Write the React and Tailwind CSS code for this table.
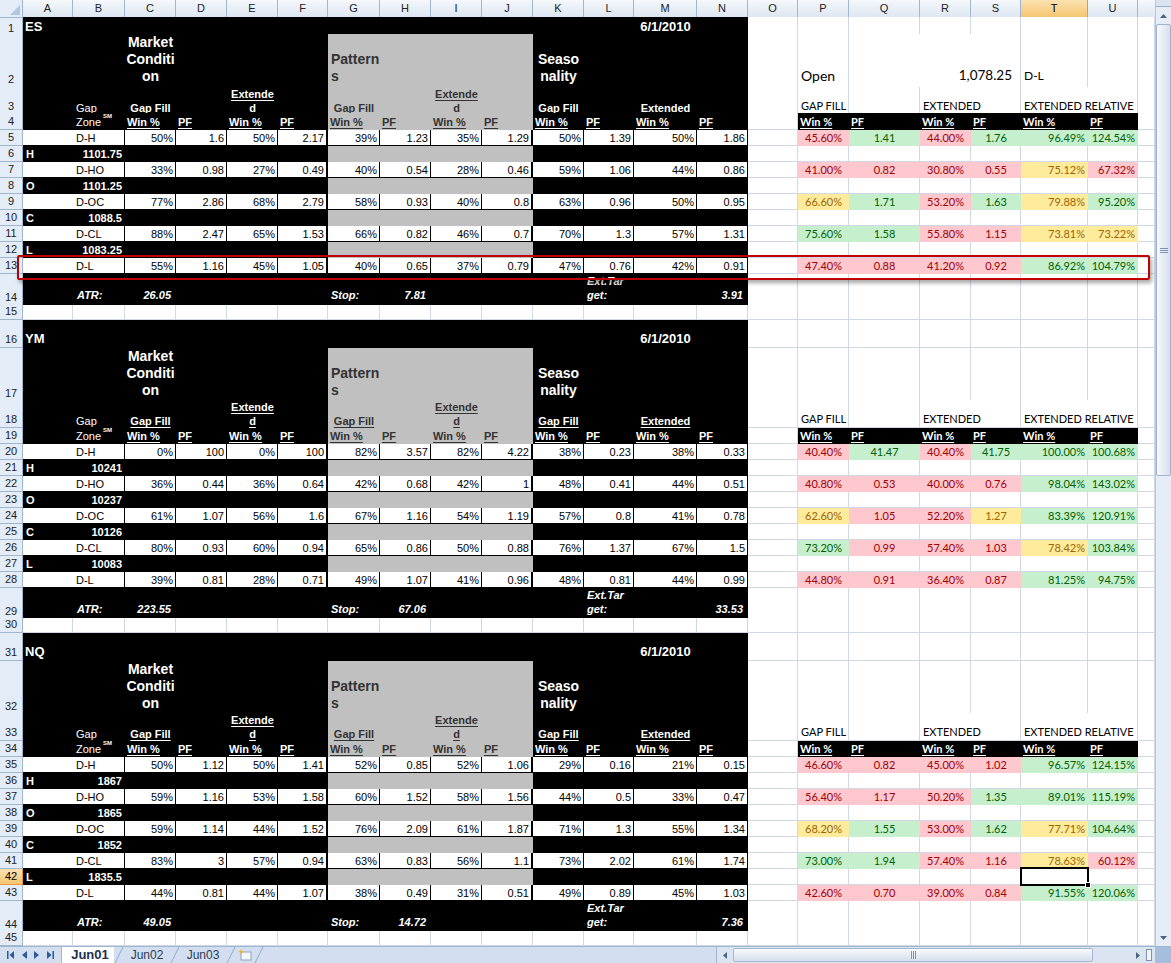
import React from "react";
import clsx from "clsx";

// column widths: row header, A..U, then the cut-off V column
const GRID =
  "grid grid-cols-[23px_50px_52px_51px_51px_51px_50px_52px_51px_51px_51px_51px_50px_63px_51px_50px_51px_71px_51px_50px_67px_50px_17px]";

const ARIAL = "font-['Liberation_Sans',Arial,sans-serif]";
const CAL = "font-['Lato','Open_Sans',sans-serif]";

const KIND = {
  blank: "bg-white border-r border-b border-[#d0d7e5]",
  blk: "bg-black text-white",
  gry: "bg-[#c0c0c0] text-[#333333]",
  dat: "bg-white border-r border-b border-black text-black",
  dat2: "bg-white border-r-2 border-b border-black text-black",
  edge: "bg-white border-b border-black",
  p: "bg-[#ffc7ce] text-[#9c0006]",
  g: "bg-[#c6efce] text-[#006100]",
  y: "bg-[#ffeb9c] text-[#9c6500]",
};

const T11 = "text-[11px] leading-[14px]";
const HU = "text-[11px] leading-[14px] font-bold underline underline-offset-[2px]";
const FT = "pb-[4px] text-[11px] leading-[14px] font-bold italic";
const R11 = "text-[11px] leading-[14px]";

const LETTERS = "ABCDEFGHIJKLMNOPQRSTU".split("");

// Blocks: ES / YM / NQ
const BLOCKS = [
  {
    name: "ES",
    start: 1,
    h: ["h-[17px]", "h-[53px]", "h-[26px]", "h-[17px]", "h-[31px]"],
    open: true,
    levels: [["H", "1101.75"], ["O", "1101.25"], ["C", "1088.5"], ["L", "1083.25"]],
    atr: "26.05",
    stop: "7.81",
    ext: "3.91",
    data: [
      ["D-H", "50% 1.6 50% 2.17 39% 1.23 35% 1.29 50% 1.39 50% 1.86", "45.60%:p 1.41:g 44.00%:p 1.76:g 96.49%:g 124.54%:g"],
      ["D-HO", "33% 0.98 27% 0.49 40% 0.54 28% 0.46 59% 1.06 44% 0.86", "41.00%:p 0.82:p 30.80%:p 0.55:p 75.12%:y 67.32%:p"],
      ["D-OC", "77% 2.86 68% 2.79 58% 0.93 40% 0.8 63% 0.96 50% 0.95", "66.60%:y 1.71:g 53.20%:p 1.63:g 79.88%:y 95.20%:g"],
      ["D-CL", "88% 2.47 65% 1.53 66% 0.82 46% 0.7 70% 1.3 57% 1.31", "75.60%:g 1.58:g 55.80%:p 1.15:p 73.81%:y 73.22%:y"],
      ["D-L", "55% 1.16 45% 1.05 40% 0.65 37% 0.79 47% 0.76 42% 0.91", "47.40%:p 0.88:p 41.20%:p 0.92:p 86.92%:g 104.79%:g"],
    ],
  },
  {
    name: "YM",
    start: 16,
    h: ["h-[28px]", "h-[52px]", "h-[28px]", "h-[16px]", "h-[30px]"],
    open: false,
    levels: [["H", "10241"], ["O", "10237"], ["C", "10126"], ["L", "10083"]],
    atr: "223.55",
    stop: "67.06",
    ext: "33.53",
    data: [
      ["D-H", "0% 100 0% 100 82% 3.57 82% 4.22 38% 0.23 38% 0.33", "40.40%:p 41.47:g 40.40%:p 41.75:g 100.00%:g 100.68%:g"],
      ["D-HO", "36% 0.44 36% 0.64 42% 0.68 42% 1 48% 0.41 44% 0.51", "40.80%:p 0.53:p 40.00%:p 0.76:p 98.04%:g 143.02%:g"],
      ["D-OC", "61% 1.07 56% 1.6 67% 1.16 54% 1.19 57% 0.8 41% 0.78", "62.60%:y 1.05:p 52.20%:p 1.27:y 83.39%:g 120.91%:g"],
      ["D-CL", "80% 0.93 60% 0.94 65% 0.86 50% 0.88 76% 1.37 67% 1.5", "73.20%:g 0.99:p 57.40%:p 1.03:p 78.42%:y 103.84%:g"],
      ["D-L", "39% 0.81 28% 0.71 49% 1.07 41% 0.96 48% 0.81 44% 0.99", "44.80%:p 0.91:p 36.40%:p 0.87:p 81.25%:g 94.75%:g"],
    ],
  },
  {
    name: "NQ",
    start: 31,
    h: ["h-[28px]", "h-[52px]", "h-[28px]", "h-[16px]", "h-[30px]"],
    open: false,
    levels: [["H", "1867"], ["O", "1865"], ["C", "1852"], ["L", "1835.5"]],
    atr: "49.05",
    stop: "14.72",
    ext: "7.36",
    data: [
      ["D-H", "50% 1.12 50% 1.41 52% 0.85 52% 1.06 29% 0.16 21% 0.15", "46.60%:p 0.82:p 45.00%:p 1.02:p 96.57%:g 124.15%:g"],
      ["D-HO", "59% 1.16 53% 1.58 60% 1.52 58% 1.56 44% 0.5 33% 0.47", "56.40%:p 1.17:p 50.20%:p 1.35:g 89.01%:g 115.19%:g"],
      ["D-OC", "59% 1.14 44% 1.52 76% 2.09 61% 1.87 71% 1.3 55% 1.34", "68.20%:y 1.55:g 53.00%:p 1.62:g 77.71%:y 104.64%:g"],
      ["D-CL", "83% 3 57% 0.94 63% 0.83 56% 1.1 73% 2.02 61% 1.74", "73.00%:g 1.94:g 57.40%:p 1.16:p 78.63%:y 60.12%:p"],
      ["D-L", "44% 0.81 44% 1.07 38% 0.49 31% 0.51 49% 0.89 45% 1.03", "42.60%:p 0.70:p 39.00%:p 0.84:p 91.55%:g 120.06%:g"],
    ],
  },
];

const SELECTED_ROW = 42;

const Cell = ({ k = "blank", className, children }) => (
  <div className={clsx("flex min-w-0 items-end whitespace-nowrap", KIND[k], className)}>{children}</div>
);

const blanks = (count, key = "b") =>
  Array.from({ length: count }, (_, i) => <Cell key={`${key}${i}`} />);

const RowHead = ({ n }) => (
  <div
    className={clsx(
      "flex items-end justify-center border-r border-b pb-[1px] text-[11px] leading-[13px]",
      n === SELECTED_ROW
        ? "border-[#f29536] bg-linear-to-b from-[#fbe2b2] to-[#f6c56e] text-black"
        : "border-[#9eb6ce] bg-[#e4ecf7] text-[#222222]"
    )}
  >
    {n}
  </div>
);

const Row = ({ h, n, children }) => (
  <div className={clsx(GRID, h)}>
    <RowHead n={n} />
    {children}
  </div>
);

const Lines = ({ lines, center, className }) => (
  <div className={clsx("flex flex-col", center && "items-center", className)}>
    {lines.map((l) => (
      <span key={l}>{l}</span>
    ))}
  </div>
);

const ColumnHeader = () => (
  <div className={clsx(GRID, "h-[17px]")}>
    <div className="relative border-r border-b border-[#9eb6ce] bg-[#e4ecf7]">
      <svg className="absolute right-[2px] bottom-[2px]" width="10" height="10">
        <polygon points="10,0 10,10 0,10" fill="#b4c6dd" />
      </svg>
    </div>
    {LETTERS.map((l) => (
      <div
        key={l}
        className={clsx(
          "flex items-center justify-center border-r border-b text-[11px]",
          l === "T"
            ? "border-[#f29536] bg-linear-to-b from-[#fbe2b2] to-[#f6c56e] text-black"
            : "border-[#9eb6ce] bg-linear-to-b from-[#f5f8fc] to-[#dde6f1] text-[#222222]"
        )}
      >
        {l}
      </div>
    ))}
    <div className="border-b border-[#9eb6ce] bg-linear-to-b from-[#f5f8fc] to-[#dde6f1]" />
  </div>
);

function Block({ b }) {
  const s = b.start;
  const head = ["blk", "blk", "blk", "blk", "gry", "gry", "gry", "gry", "blk", "blk", "blk", "blk"];
  const body = [];
  b.data.forEach((d, i) => {
    const n = s + 4 + i * 2;
    const vals = d[1].split(" ");
    const right = d[2].split(" ").map((x) => x.split(":"));
    body.push(
      <Row key={`d${n}`} h="h-[16px]" n={n}>
        <Cell k="edge" />
        <Cell k="dat" className={clsx("pl-[3px]", T11)}>{d[0]}</Cell>
        {vals.map((v, j) => (
          <Cell key={j} k={j === 3 || j === 7 ? "dat2" : "dat"} className={clsx("justify-end pr-[2px]", T11)}>
            {v}
          </Cell>
        ))}
        <Cell />
        {right.map(([t, c], j) => (
          <Cell
            key={`r${j}`}
            k={c}
            className={clsx(CAL, "pb-[1px]", R11, j < 4 ? "justify-center" : "justify-end pr-[3px]")}
          >
            {t}
          </Cell>
        ))}
        <Cell />
      </Row>
    );
    if (i < 4) {
      const lv = b.levels[i];
      body.push(
        <Row key={`l${n + 1}`} h="h-[16px]" n={n + 1}>
          <Cell k="blk" className={clsx("pl-[3px] pb-[1px] font-bold", T11)}>{lv[0]}</Cell>
          <Cell k="blk" className={clsx("justify-end pr-[3px] pb-[1px] font-bold", T11)}>{lv[1]}</Cell>
          <Cell k="blk" className="col-span-4" />
          <Cell k="gry" className="col-span-4" />
          <Cell k="blk" className="col-span-4" />
          {blanks(8)}
        </Row>
      );
    }
  });

  return (
    <>
      {/* title row */}
      <Row h={b.h[0]} n={s}>
        <Cell k="blk" className="items-center pl-[2px] text-[13px] font-bold">{b.name}</Cell>
        <Cell k="blk" className="col-span-11" />
        <Cell k="blk" className="items-center justify-center text-[13px] font-bold">6/1/2010</Cell>
        <Cell k="blk" />
        {blanks(8)}
      </Row>

      {/* section titles */}
      <Row h={b.h[1]} n={s + 1}>
        <Cell k="blk" className="col-span-2" />
        <Cell k="blk" className="justify-center pb-[3px]">
          <Lines lines={["Market", "Conditi", "on"]} center className="text-[14px] font-bold leading-[17px]" />
        </Cell>
        <Cell k="blk" className="col-span-3" />
        <Cell k="gry" className="pb-[3px] pl-[3px]">
          <Lines lines={["Pattern", "s"]} className="text-[14px] font-bold leading-[17px]" />
        </Cell>
        <Cell k="gry" className="col-span-3" />
        <Cell k="blk" className="justify-center pb-[3px]">
          <Lines lines={["Seaso", "nality"]} center className="text-[14px] font-bold leading-[17px]" />
        </Cell>
        <Cell k="blk" className="col-span-3" />
        <Cell />
        {b.open ? (
          <>
            <Cell className={clsx(CAL, "pb-[3px] pl-[3px] text-[14px] leading-[17px]")}>Open</Cell>
            <Cell className={clsx(CAL, "col-span-3 justify-end pb-[3px] pr-[8px] text-[13.5px] leading-[17px]")}>1,078.25</Cell>
            <Cell className={clsx(CAL, "pb-[4px] pl-[3px] text-[12px] leading-[15px]")}>D-L</Cell>
            <Cell />
          </>
        ) : (
          blanks(6, "o")
        )}
        <Cell />
      </Row>

      {/* Gap Fill / Extended */}
      <Row h={b.h[2]} n={s + 2}>
        <Cell k="blk" />
        <Cell k="blk" className={clsx("pl-[3px]", T11)}>Gap</Cell>
        <Cell k="blk" className={clsx("justify-center", HU)}>Gap Fill</Cell>
        <Cell k="blk" />
        <Cell k="blk" className="justify-center">
          <Lines lines={["Extende", "d"]} center className={HU} />
        </Cell>
        <Cell k="blk" />
        <Cell k="gry" className={clsx("justify-center", HU)}>Gap Fill</Cell>
        <Cell k="gry" />
        <Cell k="gry" className="justify-center">
          <Lines lines={["Extende", "d"]} center className={HU} />
        </Cell>
        <Cell k="gry" />
        <Cell k="blk" className={clsx("justify-center", HU)}>Gap Fill</Cell>
        <Cell k="blk" />
        <Cell k="blk" className={clsx("justify-center", HU)}>Extended</Cell>
        <Cell k="blk" />
        <Cell />
        <Cell className={clsx(CAL, "pl-[3px] pb-[1px]", R11)}>GAP FILL</Cell>
        <Cell />
        <Cell className={clsx(CAL, "col-span-2 pl-[3px] pb-[1px]", R11)}>EXTENDED</Cell>
        <Cell className={clsx(CAL, "col-span-2 pl-[3px] pb-[1px]", R11)}>EXTENDED RELATIVE</Cell>
        <Cell />
      </Row>

      {/* Win % / PF */}
      <Row h={b.h[3]} n={s + 3}>
        <Cell k="blk" />
        <Cell k="blk" className={clsx("pl-[3px] pb-[1px]", T11)}>
          <span>
            Zone<sup className="ml-[2px] align-top text-[6px] leading-[8px] font-bold">SM</sup>
          </span>
        </Cell>
        {head.map((k, j) => (
          <Cell key={j} k={k} className={clsx("pl-[2px] pb-[1px]", HU)}>
            {j % 2 ? "PF" : "Win %"}
          </Cell>
        ))}
        <Cell />
        {[0, 1, 2, 3, 4, 5].map((j) => (
          <Cell key={`w${j}`} k="blk" className={clsx(CAL, "pl-[2px] pb-[1px] font-bold underline underline-offset-[2px]", R11)}>
            {j % 2 ? "PF" : "Win %"}
          </Cell>
        ))}
        <Cell />
      </Row>

      {body}

      {/* ATR / Stop / Ext. target */}
      <Row h={b.h[4]} n={s + 13}>
        <Cell k="blk" />
        <Cell k="blk" className={clsx("pl-[4px]", FT)}>ATR:</Cell>
        <Cell k="blk" className={clsx("justify-end pr-[5px]", FT)}>{b.atr}</Cell>
        <Cell k="blk" className="col-span-3" />
        <Cell k="blk" className={clsx("pl-[3px]", FT)}>Stop:</Cell>
        <Cell k="blk" className={clsx("justify-end pr-[5px]", FT)}>{b.stop}</Cell>
        <Cell k="blk" className="col-span-3" />
        <Cell k="blk" className={clsx("pl-[3px]", FT)}>
          <Lines lines={["Ext.Tar", "get:"]} />
        </Cell>
        <Cell k="blk" />
        <Cell k="blk" className={clsx("justify-end pr-[5px]", FT)}>{b.ext}</Cell>
        {blanks(8)}
      </Row>

      <Row h="h-[15px]" n={s + 14}>
        {blanks(22)}
      </Row>
    </>
  );
}

const VScroll = () => (
  <div className="flex w-[16px] flex-col border-l border-[#b7c8df] bg-[#e6edf6]">
    <div className="h-[7px] border-b border-[#99afcf] bg-[#d9e3f0]" />
    <div className="flex h-[17px] items-center justify-center">
      <svg width="7" height="4">
        <path d="M0 4 L3.5 0 L7 4 Z" fill="#4e6282" />
      </svg>
    </div>
    <div className="flex h-[452px] items-center justify-center rounded-[2px] border border-[#9fb3cf] bg-linear-to-r from-[#f7f9fc] to-[#d6e0ed]">
      <svg width="8" height="7">
        <path d="M0 1.5 H8 M0 3.5 H8 M0 5.5 H8" stroke="#7f93b0" strokeWidth="1" />
      </svg>
    </div>
    <div className="flex-1" />
    <div className="flex h-[17px] items-center justify-center">
      <svg width="7" height="4">
        <path d="M0 0 L3.5 4 L7 0 Z" fill="#4e6282" />
      </svg>
    </div>
  </div>
);

const Slash = () => (
  <svg width="10" height="16" className="shrink-0">
    <line x1="1" y1="16" x2="9" y2="0" stroke="#8ea8cb" strokeWidth="1" />
  </svg>
);

const SheetTabs = () => (
  <div className="flex h-[17px] border-t border-[#9eb6ce] bg-[#d3dff0] text-[12px] leading-[14px]">
    <div className="flex w-[62px] items-center justify-around border-r border-[#9eb6ce] px-[3px]">
      <svg width="7" height="8">
        <path d="M0 0 H1.5 V8 H0 Z M7 0 L2.5 4 L7 8 Z" fill="#2f5a9a" />
      </svg>
      <svg width="5" height="8">
        <path d="M5 0 L0 4 L5 8 Z" fill="#2f5a9a" />
      </svg>
      <svg width="5" height="8">
        <path d="M0 0 L5 4 L0 8 Z" fill="#2f5a9a" />
      </svg>
      <svg width="7" height="8">
        <path d="M0 0 L4.5 4 L0 8 Z M5.5 0 H7 V8 H5.5 Z" fill="#2f5a9a" />
      </svg>
    </div>
    <div className="flex h-full items-stretch">
      <div className="flex w-[52px] items-center justify-center bg-white pl-[4px] text-[13px] font-bold text-[#1e2f4d]">Jun01</div>
      <Slash />
      <div className="flex w-[46px] items-center justify-center text-[#2c3b55]">Jun02</div>
      <Slash />
      <div className="flex w-[46px] items-center justify-center text-[#2c3b55]">Jun03</div>
      <Slash />
      <div className="flex w-[18px] items-center justify-center">
        <svg width="14" height="12">
          <rect x="3" y="3" width="10" height="8" fill="#f4f7fb" stroke="#8da3c2" />
          <path d="M3 0 L4 2 L6 2.5 L4 3.5 L3 6 L2 3.5 L0 2.5 L2 2 Z" fill="#f1b531" />
        </svg>
      </div>
      <Slash />
    </div>
    <div className="flex-1" />
    <div className="flex w-[439px] items-stretch border-l border-[#9eb6ce] bg-[#dbe5f2]">
      <div className="flex w-[16px] items-center justify-center">
        <svg width="4" height="7">
          <path d="M4 0 L0 3.5 L4 7 Z" fill="#4e6282" />
        </svg>
      </div>
      <div className="my-[1px] flex w-[360px] items-center justify-center rounded-[2px] border border-[#a4b7d2] bg-linear-to-b from-[#f8fafd] to-[#d6dfec]">
        <svg width="7" height="8">
          <path d="M1.5 0 V8 M3.5 0 V8 M5.5 0 V8" stroke="#7f93b0" strokeWidth="1" />
        </svg>
      </div>
      <div className="flex-1" />
      <div className="flex w-[16px] items-center justify-center">
        <svg width="4" height="7">
          <path d="M0 0 L4 3.5 L0 7 Z" fill="#4e6282" />
        </svg>
      </div>
      <div className="my-[2px] w-[6px] border border-[#7f93b0] bg-[#f1f5fa]" />
      <div className="w-[3px]" />
    </div>
    <div className="w-[16px] bg-[#a6bedd]" />
  </div>
);

export default function App() {
  return (
    <div className={clsx("flex h-[963px] w-[1171px] flex-col overflow-hidden bg-white text-black", ARIAL)}>
      <div className="flex h-[946px]">
        <div className="relative w-[1155px] overflow-hidden">
          <ColumnHeader />
          {BLOCKS.map((b) => (
            <Block key={b.name} b={b} />
          ))}

          {/* red highlight drawn over row 13 */}
          <div className="pointer-events-none absolute top-[255px] left-[17px] h-[25px] w-[1133px] rounded-[2px] border-2 border-[#c00000] shadow-[2px_3px_4px_rgba(0,0,0,0.35)]" />

          {/* active cell T42 */}
          <div className="pointer-events-none absolute top-[867px] left-[1020px] h-[19px] w-[69px] border-2 border-black">
            <div className="absolute -right-[4px] -bottom-[4px] h-[6px] w-[6px] border border-white bg-black" />
          </div>
        </div>
        <VScroll />
      </div>
      <SheetTabs />
    </div>
  );
}
